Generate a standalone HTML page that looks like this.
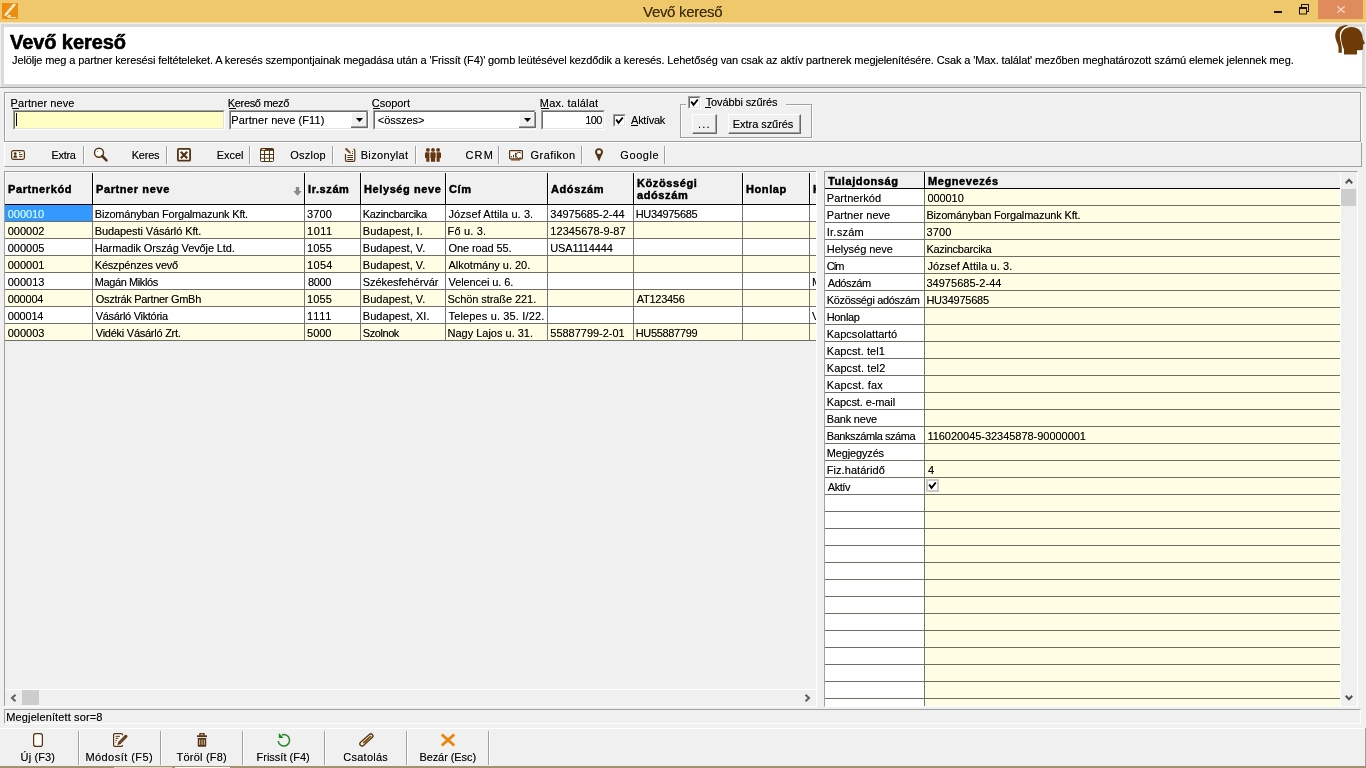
<!DOCTYPE html><html><head><meta charset="utf-8"><title>Vevő kereső</title><style>
html,body{margin:0;padding:0;width:1366px;height:768px;overflow:hidden;background:#f0f0f0;font-family:"Liberation Sans", sans-serif;font-size:11px;color:#000;}
#root div{position:absolute;box-sizing:border-box;}
#root{will-change:transform;position:absolute;left:0;top:0;width:1366px;height:768px;overflow:hidden;}
.t{white-space:pre;text-shadow:0 0 0 rgba(0,0,0,0.45);}
svg{position:absolute;overflow:visible;}

</style></head><body><div id="root">
<div style="left:0px;top:0px;width:1366px;height:22px;background:#efc86b;"></div>
<div style="left:0px;top:22px;width:1366px;height:1px;background:#f6e2ae;"></div>
<div style="left:0px;top:23px;width:1366px;height:1px;background:#f3efe2;"></div>
<div style="left:2px;top:3px;width:16px;height:16px;background:#ee8c12;"></div>
<svg style="left:2px;top:3px" width="16" height="16" viewBox="0 0 16 16"><path d="M2.2 13 L2.8 11 L11.4 0.8 Q12.5 0 13.4 1 Q14 2 13.2 2.6 L4.6 12.6 Z" fill="#fff6d6"/><path d="M6.3 7.6 L7.3 8.4 M9.2 4.3 L10.1 5" stroke="#e0a040" stroke-width="0.8"/><path d="M5.2 14 Q6.8 11.8 8.3 12.6 Q8 14.2 6.2 14.2 L14.2 14.8" stroke="#fff3c8" stroke-width="1.1" fill="none"/></svg>
<div class="t" style="left:643px;top:3px;line-height:17px;font-size:15px;color:#3c2b08;letter-spacing:-0.3px;">Vevő kereső</div>
<div style="left:1274px;top:11px;width:8px;height:2px;background:#1a1205;"></div>
<svg style="left:1299px;top:4px" width="11" height="11" viewBox="0 0 11 11"><path d="M2.5 2.5 V0.5 H9.5 V7.5 H7.5" stroke="#1a1205" stroke-width="1" fill="none" stroke-linejoin="miter" shape-rendering="crispEdges"/><rect x="0.5" y="3.5" width="7" height="6.5" stroke="#1a1205" stroke-width="1" fill="none"/><rect x="0" y="3" width="8" height="2" fill="#1a1205"/></svg>
<div style="left:1318px;top:0px;width:45px;height:19px;background:#e08b5c;"></div>
<svg style="left:1337px;top:6px" width="8" height="7" viewBox="0 0 8 7"><path d="M0.3 0.3 L7.7 6.7 M7.7 0.3 L0.3 6.7" stroke="#fbd8c2" stroke-width="1.2"/></svg>
<div style="left:1px;top:24px;width:1364px;height:64px;background:#dadada;"></div>
<div style="left:4px;top:27px;width:1358px;height:57px;background:#ffffff;"></div>
<div style="left:0px;top:87px;width:1366px;height:1px;background:#a0a0a0;"></div>
<div class="t" style="left:10px;top:31px;line-height:23px;font-size:20px;font-weight:bold;letter-spacing:-0.08px;-webkit-text-stroke:0.5px #000;">Vevő kereső</div>
<div class="t" style="left:12px;top:54px;line-height:13px;font-size:11px;letter-spacing:-0.116px;">Jelölje meg a partner keresési feltételeket. A keresés szempontjainak megadása után a 'Frissít (F4)' gomb leütésével kezdődik a keresés. Lehetőség van csak az aktív partnerek megjelenítésére. Csak a 'Max. találat' mezőben meghatározott számú elemek jelennek meg.</div>
<svg style="left:1334px;top:24px" width="32" height="32" viewBox="0 0 32 32"><path d="M13 1 C6 1.2 1.2 5.5 1.2 11.5 C1.2 16.5 4.5 20 4.5 24 V28.7 H7.8 V24 C7.6 19.5 5.8 16 5.8 11.5 C5.8 6.5 9.5 2.8 13.8 1.8 Z" fill="#6e3a06"/><path d="M10 30.6 V25.5 C8.5 22 7 18 7 13 C7 6.5 11.5 2.9 17.5 2.9 C23.5 2.9 28 6.5 28.5 12.5 L28.8 15 L31 19.5 L29 20.5 V24.5 C29 25.8 28.3 26.2 27 26.2 H23 V30.6 Z" fill="#6e3a06"/></svg>
<div style="left:4px;top:92px;width:1357px;height:50px;border:1px solid #a0a0a0;box-shadow:inset 1px 1px 0 #fff, 1px 1px 0 #fff;"></div>
<div class="t" style="left:10.6px;top:97px;line-height:13px;font-size:11px;letter-spacing:0.073px;">Partner neve</div>
<div style="left:12px;top:108px;width:7px;height:1px;background:#000;"></div>
<div style="left:13px;top:110px;width:212px;height:20px;background:#ffffc4;border-top:1px solid #a0a0a0;border-left:1px solid #a0a0a0;border-right:1px solid #fff;border-bottom:1px solid #fff;"></div>
<div style="left:14px;top:111px;width:210px;height:18px;border-top:1px solid #696969;border-left:1px solid #696969;border-right:1px solid #e3e3e3;border-bottom:1px solid #e3e3e3;"></div>
<div style="left:16px;top:113px;width:1px;height:13px;background:#000;"></div>
<div class="t" style="left:227.7px;top:97px;line-height:13px;font-size:11px;letter-spacing:-0.310px;">Kereső mező</div>
<div style="left:229px;top:108px;width:7px;height:1px;background:#000;"></div>
<div style="left:229px;top:110px;width:140px;height:20px;background:#fff;border-top:1px solid #a0a0a0;border-left:1px solid #a0a0a0;border-right:1px solid #fff;border-bottom:1px solid #fff;"></div>
<div style="left:230px;top:111px;width:138px;height:18px;border-top:1px solid #696969;border-left:1px solid #696969;border-right:1px solid #e3e3e3;border-bottom:1px solid #e3e3e3;"></div>
<div class="t" style="left:231.3px;top:114px;line-height:13px;font-size:11px;letter-spacing:0.088px;">Partner neve (F11)</div>
<div style="left:351px;top:112px;width:17px;height:16px;background:#f0f0f0;border-right:1px solid #696969;border-bottom:1px solid #696969;box-shadow:inset -1px -1px 0 #a0a0a0, inset 1px 1px 0 #fff;"></div>
<svg style="left:356px;top:118px" width="7" height="4" viewBox="0 0 7 4"><path d="M0 0 H7 L3.5 4 Z" fill="#000"/></svg>
<div class="t" style="left:371.8px;top:97px;line-height:13px;font-size:11px;letter-spacing:-0.050px;">Csoport</div>
<div style="left:373px;top:108px;width:7px;height:1px;background:#000;"></div>
<div style="left:373px;top:110px;width:163px;height:20px;background:#fff;border-top:1px solid #a0a0a0;border-left:1px solid #a0a0a0;border-right:1px solid #fff;border-bottom:1px solid #fff;"></div>
<div style="left:374px;top:111px;width:161px;height:18px;border-top:1px solid #696969;border-left:1px solid #696969;border-right:1px solid #e3e3e3;border-bottom:1px solid #e3e3e3;"></div>
<div class="t" style="left:377.8px;top:114px;line-height:13px;font-size:11px;letter-spacing:-0.071px;">&lt;összes&gt;</div>
<div style="left:519px;top:112px;width:17px;height:16px;background:#f0f0f0;border-right:1px solid #696969;border-bottom:1px solid #696969;box-shadow:inset -1px -1px 0 #a0a0a0, inset 1px 1px 0 #fff;"></div>
<svg style="left:524px;top:118px" width="7" height="4" viewBox="0 0 7 4"><path d="M0 0 H7 L3.5 4 Z" fill="#000"/></svg>
<div class="t" style="left:539.8px;top:97px;line-height:13px;font-size:11px;letter-spacing:0.182px;">Max. találat</div>
<div style="left:541px;top:108px;width:8px;height:1px;background:#000;"></div>
<div style="left:541px;top:110px;width:64px;height:20px;background:#fff;border-top:1px solid #a0a0a0;border-left:1px solid #a0a0a0;border-right:1px solid #fff;border-bottom:1px solid #fff;"></div>
<div style="left:542px;top:111px;width:62px;height:18px;border-top:1px solid #696969;border-left:1px solid #696969;border-right:1px solid #e3e3e3;border-bottom:1px solid #e3e3e3;"></div>
<div class="t" style="left:585.3px;top:114px;line-height:13px;font-size:11px;letter-spacing:-0.600px;">100</div>
<div style="left:613px;top:114px;width:13px;height:13px;background:#fff;border-top:1px solid #a0a0a0;border-left:1px solid #a0a0a0;border-right:1px solid #fff;border-bottom:1px solid #fff;"></div>
<div style="left:614px;top:115px;width:11px;height:11px;border-top:1px solid #696969;border-left:1px solid #696969;border-right:1px solid #e3e3e3;border-bottom:1px solid #e3e3e3;"></div>
<svg style="left:615px;top:116px" width="9" height="9" viewBox="0 0 9 9"><path d="M1.2 3.5 L3.5 6.8 L7.8 1.5" stroke="#000" stroke-width="1.9" fill="none"/></svg>
<div class="t" style="left:631.1px;top:114px;line-height:13px;font-size:11px;letter-spacing:-0.300px;">Aktívak</div>
<div style="left:631px;top:125px;width:7px;height:1px;background:#000;"></div>
<div style="left:680px;top:104px;width:132px;height:34px;border:1px solid #a0a0a0;box-shadow:inset 1px 1px 0 #fff, 1px 1px 0 #fff;"></div>
<div style="left:686px;top:95px;width:100px;height:14px;background:#f0f0f0;"></div>
<div style="left:688px;top:96px;width:13px;height:13px;background:#fff;border-top:1px solid #a0a0a0;border-left:1px solid #a0a0a0;border-right:1px solid #fff;border-bottom:1px solid #fff;"></div>
<div style="left:689px;top:97px;width:11px;height:11px;border-top:1px solid #696969;border-left:1px solid #696969;border-right:1px solid #e3e3e3;border-bottom:1px solid #e3e3e3;"></div>
<svg style="left:690px;top:98px" width="9" height="9" viewBox="0 0 9 9"><path d="M1.2 3.5 L3.5 6.8 L7.8 1.5" stroke="#000" stroke-width="1.9" fill="none"/></svg>
<div class="t" style="left:705.7px;top:96px;line-height:13px;font-size:11px;letter-spacing:-0.123px;">További szűrés</div>
<div style="left:705px;top:107px;width:6px;height:1px;background:#000;"></div>
<div style="left:692px;top:114px;width:25px;height:20px;background:#f0f0f0;border-top:1px solid #fff;border-left:1px solid #fff;border-right:1px solid #696969;border-bottom:1px solid #696969;box-shadow:inset -1px -1px 0 #a0a0a0;"></div>
<div class="t" style="left:644.5px;width:120px;text-align:center;top:118px;line-height:13px;font-size:11px;letter-spacing:1.2px;">...</div>
<div style="left:728px;top:114px;width:73px;height:20px;background:#f0f0f0;border-top:1px solid #fff;border-left:1px solid #fff;border-right:1px solid #696969;border-bottom:1px solid #696969;box-shadow:inset -1px -1px 0 #a0a0a0;"></div>
<div class="t" style="left:732.8px;top:118px;line-height:13px;font-size:11px;letter-spacing:-0.055px;">Extra szűrés</div>
<div style="left:4px;top:142px;width:1358px;height:25px;border-bottom:1px solid #a0a0a0;border-right:1px solid #a0a0a0;border-top:1px solid #fff;border-left:1px solid #fff;"></div>
<div style="left:83px;top:146px;width:1px;height:18px;background:#a0a0a0;"></div>
<div style="left:84px;top:146px;width:1px;height:18px;background:#fff;"></div>
<div style="left:166px;top:146px;width:1px;height:18px;background:#a0a0a0;"></div>
<div style="left:167px;top:146px;width:1px;height:18px;background:#fff;"></div>
<div style="left:249px;top:146px;width:1px;height:18px;background:#a0a0a0;"></div>
<div style="left:250px;top:146px;width:1px;height:18px;background:#fff;"></div>
<div style="left:332px;top:146px;width:1px;height:18px;background:#a0a0a0;"></div>
<div style="left:333px;top:146px;width:1px;height:18px;background:#fff;"></div>
<div style="left:415px;top:146px;width:1px;height:18px;background:#a0a0a0;"></div>
<div style="left:416px;top:146px;width:1px;height:18px;background:#fff;"></div>
<div style="left:498px;top:146px;width:1px;height:18px;background:#a0a0a0;"></div>
<div style="left:499px;top:146px;width:1px;height:18px;background:#fff;"></div>
<div style="left:581px;top:146px;width:1px;height:18px;background:#a0a0a0;"></div>
<div style="left:582px;top:146px;width:1px;height:18px;background:#fff;"></div>
<div style="left:664px;top:146px;width:1px;height:18px;background:#a0a0a0;"></div>
<div style="left:665px;top:146px;width:1px;height:18px;background:#fff;"></div>
<div class="t" style="left:51.5px;top:149px;line-height:13px;font-size:11px;letter-spacing:-0.300px;">Extra</div>
<div class="t" style="left:131.7px;top:149px;line-height:13px;font-size:11px;letter-spacing:-0.225px;">Keres</div>
<div class="t" style="left:216.8px;top:149px;line-height:13px;font-size:11px;letter-spacing:-0.075px;">Excel</div>
<div class="t" style="left:290.3px;top:149px;line-height:13px;font-size:11px;letter-spacing:0.240px;">Oszlop</div>
<div class="t" style="left:360.7px;top:149px;line-height:13px;font-size:11px;letter-spacing:0.337px;">Bizonylat</div>
<div class="t" style="left:465.5px;top:149px;line-height:13px;font-size:11px;letter-spacing:1.150px;">CRM</div>
<div class="t" style="left:530.6px;top:149px;line-height:13px;font-size:11px;letter-spacing:0.414px;">Grafikon</div>
<div class="t" style="left:620.3px;top:149px;line-height:13px;font-size:11px;letter-spacing:0.580px;">Google</div>
<svg style="left:11px;top:150px" width="14" height="10" viewBox="0 0 14 10"><rect x="0.6" y="0.6" width="12.8" height="8.8" rx="1.8" fill="#fffdf8" stroke="#523316" stroke-width="1.2"/><circle cx="4.2" cy="3.6" r="1.4" fill="#523316"/><path d="M2.2 7.8 L3 5.2 H5.4 L6.2 7.8 Z" fill="#523316"/><path d="M8 2.5 H9.5 M8 4.6 H11.5 M8 6.6 H11.5" stroke="#523316" stroke-width="1"/></svg>
<svg style="left:93px;top:147px" width="16" height="15" viewBox="0 0 16 15"><circle cx="6" cy="5.8" r="4.5" fill="#fffdf8" stroke="#523316" stroke-width="1.4"/><path d="M9.2 9 L13.5 13.3" stroke="#523316" stroke-width="2.6" stroke-linecap="round"/><path d="M4.3 4.6 L5 3.9" stroke="#333" stroke-width="1"/></svg>
<svg style="left:177px;top:148px" width="14" height="14" viewBox="0 0 14 14"><rect x="0.9" y="0.9" width="12.2" height="11.8" rx="1" fill="#fffdf8" stroke="#523316" stroke-width="1.8"/><path d="M3.8 3.8 L10.2 10.2 M10.2 3.8 L3.8 10.2" stroke="#523316" stroke-width="2.2"/></svg>
<svg style="left:260px;top:148px" width="14" height="14" viewBox="0 0 14 14"><rect x="0.5" y="0.5" width="13" height="13" rx="1" fill="#fffdf8" stroke="#523316" stroke-width="1"/><rect x="0.5" y="0.5" width="13" height="2.4" fill="#523316"/><ellipse cx="3.5" cy="1.5" rx="2" ry="0.6" fill="#fff3e0"/><path d="M0.5 6.5 H13.5 M0.5 10.2 H13.5 M4.5 2.5 V13.5 M9.5 2.5 V13.5" stroke="#523316" stroke-width="1"/></svg>
<svg style="left:344px;top:147px" width="12" height="15" viewBox="0 0 12 15"><path d="M1.5 7 V13 Q1.5 14.3 2.8 14.3 H9.5 Q10.8 14.3 10.8 13 V3.5 Q10.8 2.2 9.5 2.2" stroke="#523316" stroke-width="1.2" fill="#fffdf8"/><path d="M3.3 8.5 H9 M3.3 10.5 H9 M3.3 12.5 H9" stroke="#523316" stroke-width="1"/><circle cx="8.5" cy="4.5" r="0.55" fill="#523316"/><circle cx="8.5" cy="6.4" r="0.55" fill="#523316"/><path d="M0.8 2 L2.5 0.8 L6.5 5 L7 6.8 L5.2 6.3 Z" fill="#7a4a1c"/></svg>
<svg style="left:425px;top:148px" width="16" height="14" viewBox="0 0 16 14"><g fill="#643610"><circle cx="2.9" cy="1.9" r="1.9"/><circle cx="8" cy="1.9" r="1.9"/><circle cx="13.1" cy="1.9" r="1.9"/><path d="M0.8 4.3 H4.4 V13.8 H1.3 V10 H0 V5.2 Z"/><path d="M5.9 4.3 H10.1 L10.6 5 V10 L10.1 10 V13.8 H5.9 V10 L5.4 10 V5 Z"/><path d="M11.6 4.3 H15.2 L16 5.2 V10 H14.7 V13.8 H11.6 Z"/></g></svg>
<svg style="left:509px;top:150px" width="14" height="11" viewBox="0 0 14 11"><rect x="0.6" y="0.6" width="12.8" height="8.3" rx="0.8" fill="#fffdf8" stroke="#523316" stroke-width="1.2"/><path d="M2.3 7.5 V6 M4.5 7.5 V4.8 M6.6 7.5 V2.8" stroke="#523316" stroke-width="1"/><path d="M11.8 3 A3 3 0 1 0 11.8 7.6" stroke="#523316" stroke-width="1" fill="none"/><rect x="2.2" y="9" width="9" height="1.6" fill="#8a5a2a"/></svg>
<svg style="left:595px;top:148px" width="8" height="14" viewBox="0 0 8 14"><path d="M4 0.2 C1.8 0.2 0 1.9 0 4.1 C0 5.8 1.2 7 1.8 8.5 L4 13.5 L6.2 8.5 C6.8 7 8 5.8 8 4.1 C8 1.9 6.2 0.2 4 0.2 Z" fill="#523316"/><circle cx="4" cy="4" r="2" fill="#fffdf8"/></svg>
<div style="left:4px;top:171px;width:812px;height:535px;background:#f0f0f0;"></div>
<div style="left:4px;top:171px;width:812px;height:1px;background:#a0a0a0;"></div>
<div style="left:4px;top:171px;width:1px;height:535px;background:#a0a0a0;"></div>
<div style="left:5px;top:172px;width:811px;height:517px;overflow:hidden;">
<div style="left:0px;top:0px;width:811px;height:32px;background:#f0f0f0;"></div>
<div style="left:0px;top:32px;width:811px;height:1px;background:#000;"></div>
<div style="left:87px;top:0px;width:1px;height:32px;background:#000;"></div>
<div style="left:88px;top:0px;width:1px;height:32px;background:#fff;"></div>
<div style="left:299px;top:0px;width:1px;height:32px;background:#000;"></div>
<div style="left:300px;top:0px;width:1px;height:32px;background:#fff;"></div>
<div style="left:355px;top:0px;width:1px;height:32px;background:#000;"></div>
<div style="left:356px;top:0px;width:1px;height:32px;background:#fff;"></div>
<div style="left:440px;top:0px;width:1px;height:32px;background:#000;"></div>
<div style="left:441px;top:0px;width:1px;height:32px;background:#fff;"></div>
<div style="left:542px;top:0px;width:1px;height:32px;background:#000;"></div>
<div style="left:543px;top:0px;width:1px;height:32px;background:#fff;"></div>
<div style="left:628px;top:0px;width:1px;height:32px;background:#000;"></div>
<div style="left:629px;top:0px;width:1px;height:32px;background:#fff;"></div>
<div style="left:737px;top:0px;width:1px;height:32px;background:#000;"></div>
<div style="left:738px;top:0px;width:1px;height:32px;background:#fff;"></div>
<div style="left:804px;top:0px;width:1px;height:32px;background:#000;"></div>
<div style="left:805px;top:0px;width:1px;height:32px;background:#fff;"></div>
<div style="left:0px;top:0px;width:1px;height:32px;background:#fff;"></div>
<div style="left:0px;top:0px;width:811px;height:1px;background:#fff;"></div>
<div class="t" style="left:3px;top:11px;line-height:13px;font-size:11px;font-weight:bold;letter-spacing:0.6px;-webkit-text-stroke:0.35px #000;">Partnerkód</div>
<div class="t" style="left:91px;top:11px;line-height:13px;font-size:11px;font-weight:bold;letter-spacing:0.6px;-webkit-text-stroke:0.35px #000;">Partner neve</div>
<div class="t" style="left:303px;top:11px;line-height:13px;font-size:11px;font-weight:bold;letter-spacing:0.6px;-webkit-text-stroke:0.35px #000;">Ir.szám</div>
<div class="t" style="left:359px;top:11px;line-height:13px;font-size:11px;font-weight:bold;letter-spacing:0.6px;-webkit-text-stroke:0.35px #000;">Helység neve</div>
<div class="t" style="left:444px;top:11px;line-height:13px;font-size:11px;font-weight:bold;letter-spacing:0.6px;-webkit-text-stroke:0.35px #000;">Cím</div>
<div class="t" style="left:546px;top:11px;line-height:13px;font-size:11px;font-weight:bold;letter-spacing:0.6px;-webkit-text-stroke:0.35px #000;">Adószám</div>
<div class="t" style="left:632px;top:5px;line-height:13px;font-size:11px;font-weight:bold;letter-spacing:0.6px;-webkit-text-stroke:0.35px #000;">Közösségi</div>
<div class="t" style="left:632px;top:17px;line-height:13px;font-size:11px;font-weight:bold;letter-spacing:0.6px;-webkit-text-stroke:0.35px #000;">adószám</div>
<div class="t" style="left:741px;top:11px;line-height:13px;font-size:11px;font-weight:bold;letter-spacing:0.6px;-webkit-text-stroke:0.35px #000;">Honlap</div>
<div class="t" style="left:808px;top:11px;line-height:13px;font-size:11px;font-weight:bold;letter-spacing:0.6px;-webkit-text-stroke:0.35px #000;">Kapcsolattartó</div>
<svg style="left:288px;top:15px" width="9" height="9" viewBox="0 0 9 9"><path d="M2.8 0 H6.2 V4 H8.8 L4.5 8.8 L0.2 4 H2.8 Z" fill="#8a8a8a"/></svg>
<div style="left:0px;top:33px;width:811px;height:16px;background:#ffffff;"></div>
<div style="left:0px;top:49px;width:811px;height:1px;background:#6e6e62;"></div>
<div style="left:87px;top:33px;width:1px;height:17px;background:#747474;"></div>
<div style="left:299px;top:33px;width:1px;height:17px;background:#747474;"></div>
<div style="left:355px;top:33px;width:1px;height:17px;background:#747474;"></div>
<div style="left:440px;top:33px;width:1px;height:17px;background:#747474;"></div>
<div style="left:542px;top:33px;width:1px;height:17px;background:#747474;"></div>
<div style="left:628px;top:33px;width:1px;height:17px;background:#747474;"></div>
<div style="left:737px;top:33px;width:1px;height:17px;background:#747474;"></div>
<div style="left:804px;top:33px;width:1px;height:17px;background:#747474;"></div>
<div style="left:0px;top:33px;width:87px;height:16px;background:#3399ff;"></div>
<div class="t" style="left:2.8px;top:36px;line-height:13px;font-size:11px;letter-spacing:-0.060px;color:#d6ffff;text-shadow:0 0 0 rgba(214,255,255,0.45);">000010</div>
<div class="t" style="left:89.75px;top:36px;line-height:13px;font-size:11px;letter-spacing:-0.198px;">Bizományban Forgalmazunk Kft.</div>
<div class="t" style="left:302.1px;top:36px;line-height:13px;font-size:11px;letter-spacing:0.100px;">3700</div>
<div class="t" style="left:357.8px;top:36px;line-height:13px;font-size:11px;letter-spacing:-0.350px;">Kazincbarcika</div>
<div class="t" style="left:443.5px;top:36px;line-height:13px;font-size:11px;letter-spacing:0.083px;">József Attila u. 3.</div>
<div class="t" style="left:545.3px;top:36px;line-height:13px;font-size:11px;letter-spacing:-0.025px;">34975685-2-44</div>
<div class="t" style="left:630.7px;top:36px;line-height:13px;font-size:11px;letter-spacing:-0.322px;">HU34975685</div>
<div style="left:0px;top:50px;width:811px;height:16px;background:#fffee4;"></div>
<div style="left:0px;top:66px;width:811px;height:1px;background:#6e6e62;"></div>
<div style="left:87px;top:50px;width:1px;height:17px;background:#747474;"></div>
<div style="left:299px;top:50px;width:1px;height:17px;background:#747474;"></div>
<div style="left:355px;top:50px;width:1px;height:17px;background:#747474;"></div>
<div style="left:440px;top:50px;width:1px;height:17px;background:#747474;"></div>
<div style="left:542px;top:50px;width:1px;height:17px;background:#747474;"></div>
<div style="left:628px;top:50px;width:1px;height:17px;background:#747474;"></div>
<div style="left:737px;top:50px;width:1px;height:17px;background:#747474;"></div>
<div style="left:804px;top:50px;width:1px;height:17px;background:#747474;"></div>
<div class="t" style="left:2.75px;top:53px;line-height:13px;font-size:11px;letter-spacing:-0.010px;">000002</div>
<div class="t" style="left:89.75px;top:53px;line-height:13px;font-size:11px;letter-spacing:-0.107px;">Budapesti Vásárló Kft.</div>
<div class="t" style="left:302.1px;top:53px;line-height:13px;font-size:11px;letter-spacing:0.433px;">1011</div>
<div class="t" style="left:357.8px;top:53px;line-height:13px;font-size:11px;letter-spacing:0.118px;">Budapest, I.</div>
<div class="t" style="left:442.5px;top:53px;line-height:13px;font-size:11px;letter-spacing:0.171px;">Fő u. 3.</div>
<div class="t" style="left:545.3px;top:53px;line-height:13px;font-size:11px;letter-spacing:0.058px;">12345678-9-87</div>
<div style="left:0px;top:67px;width:811px;height:16px;background:#ffffff;"></div>
<div style="left:0px;top:83px;width:811px;height:1px;background:#6e6e62;"></div>
<div style="left:87px;top:67px;width:1px;height:17px;background:#747474;"></div>
<div style="left:299px;top:67px;width:1px;height:17px;background:#747474;"></div>
<div style="left:355px;top:67px;width:1px;height:17px;background:#747474;"></div>
<div style="left:440px;top:67px;width:1px;height:17px;background:#747474;"></div>
<div style="left:542px;top:67px;width:1px;height:17px;background:#747474;"></div>
<div style="left:628px;top:67px;width:1px;height:17px;background:#747474;"></div>
<div style="left:737px;top:67px;width:1px;height:17px;background:#747474;"></div>
<div style="left:804px;top:67px;width:1px;height:17px;background:#747474;"></div>
<div class="t" style="left:2.75px;top:70px;line-height:13px;font-size:11px;letter-spacing:-0.010px;">000005</div>
<div class="t" style="left:89.75px;top:70px;line-height:13px;font-size:11px;letter-spacing:-0.113px;">Harmadik Ország Vevője Ltd.</div>
<div class="t" style="left:302.1px;top:70px;line-height:13px;font-size:11px;letter-spacing:0.100px;">1055</div>
<div class="t" style="left:357.8px;top:70px;line-height:13px;font-size:11px;letter-spacing:0.045px;">Budapest, V.</div>
<div class="t" style="left:443.5px;top:70px;line-height:13px;font-size:11px;letter-spacing:-0.100px;">One road 55.</div>
<div class="t" style="left:545.3px;top:70px;line-height:13px;font-size:11px;letter-spacing:-0.144px;">USA1114444</div>
<div style="left:0px;top:84px;width:811px;height:16px;background:#fffee4;"></div>
<div style="left:0px;top:100px;width:811px;height:1px;background:#6e6e62;"></div>
<div style="left:87px;top:84px;width:1px;height:17px;background:#747474;"></div>
<div style="left:299px;top:84px;width:1px;height:17px;background:#747474;"></div>
<div style="left:355px;top:84px;width:1px;height:17px;background:#747474;"></div>
<div style="left:440px;top:84px;width:1px;height:17px;background:#747474;"></div>
<div style="left:542px;top:84px;width:1px;height:17px;background:#747474;"></div>
<div style="left:628px;top:84px;width:1px;height:17px;background:#747474;"></div>
<div style="left:737px;top:84px;width:1px;height:17px;background:#747474;"></div>
<div style="left:804px;top:84px;width:1px;height:17px;background:#747474;"></div>
<div class="t" style="left:2.75px;top:87px;line-height:13px;font-size:11px;letter-spacing:-0.010px;">000001</div>
<div class="t" style="left:89.75px;top:87px;line-height:13px;font-size:11px;letter-spacing:-0.196px;">Készpénzes vevő</div>
<div class="t" style="left:302.1px;top:87px;line-height:13px;font-size:11px;letter-spacing:0.300px;">1054</div>
<div class="t" style="left:357.8px;top:87px;line-height:13px;font-size:11px;letter-spacing:0.045px;">Budapest, V.</div>
<div class="t" style="left:443.5px;top:87px;line-height:13px;font-size:11px;letter-spacing:-0.013px;">Alkotmány u. 20.</div>
<div style="left:0px;top:101px;width:811px;height:16px;background:#ffffff;"></div>
<div style="left:0px;top:117px;width:811px;height:1px;background:#6e6e62;"></div>
<div style="left:87px;top:101px;width:1px;height:17px;background:#747474;"></div>
<div style="left:299px;top:101px;width:1px;height:17px;background:#747474;"></div>
<div style="left:355px;top:101px;width:1px;height:17px;background:#747474;"></div>
<div style="left:440px;top:101px;width:1px;height:17px;background:#747474;"></div>
<div style="left:542px;top:101px;width:1px;height:17px;background:#747474;"></div>
<div style="left:628px;top:101px;width:1px;height:17px;background:#747474;"></div>
<div style="left:737px;top:101px;width:1px;height:17px;background:#747474;"></div>
<div style="left:804px;top:101px;width:1px;height:17px;background:#747474;"></div>
<div class="t" style="left:2.75px;top:104px;line-height:13px;font-size:11px;letter-spacing:-0.010px;">000013</div>
<div class="t" style="left:89.75px;top:104px;line-height:13px;font-size:11px;letter-spacing:-0.405px;">Magán Miklós</div>
<div class="t" style="left:303.1px;top:104px;line-height:13px;font-size:11px;letter-spacing:-0.367px;">8000</div>
<div class="t" style="left:357.8px;top:104px;line-height:13px;font-size:11px;letter-spacing:-0.062px;">Székesfehérvár</div>
<div class="t" style="left:443.5px;top:104px;line-height:13px;font-size:11px;letter-spacing:-0.092px;">Velencei u. 6.</div>
<div class="t" style="left:807px;top:104px;line-height:13px;font-size:11px;letter-spacing:-0.15px;">Magán Miklós</div>
<div style="left:0px;top:118px;width:811px;height:16px;background:#fffee4;"></div>
<div style="left:0px;top:134px;width:811px;height:1px;background:#6e6e62;"></div>
<div style="left:87px;top:118px;width:1px;height:17px;background:#747474;"></div>
<div style="left:299px;top:118px;width:1px;height:17px;background:#747474;"></div>
<div style="left:355px;top:118px;width:1px;height:17px;background:#747474;"></div>
<div style="left:440px;top:118px;width:1px;height:17px;background:#747474;"></div>
<div style="left:542px;top:118px;width:1px;height:17px;background:#747474;"></div>
<div style="left:628px;top:118px;width:1px;height:17px;background:#747474;"></div>
<div style="left:737px;top:118px;width:1px;height:17px;background:#747474;"></div>
<div style="left:804px;top:118px;width:1px;height:17px;background:#747474;"></div>
<div class="t" style="left:2.75px;top:121px;line-height:13px;font-size:11px;letter-spacing:-0.210px;">000004</div>
<div class="t" style="left:90.75px;top:121px;line-height:13px;font-size:11px;letter-spacing:-0.303px;">Osztrák Partner GmBh</div>
<div class="t" style="left:302.1px;top:121px;line-height:13px;font-size:11px;letter-spacing:0.100px;">1055</div>
<div class="t" style="left:357.8px;top:121px;line-height:13px;font-size:11px;letter-spacing:0.045px;">Budapest, V.</div>
<div class="t" style="left:442.5px;top:121px;line-height:13px;font-size:11px;letter-spacing:-0.075px;">Schön straße 221.</div>
<div class="t" style="left:631.7px;top:121px;line-height:13px;font-size:11px;letter-spacing:-0.257px;">AT123456</div>
<div style="left:0px;top:135px;width:811px;height:16px;background:#ffffff;"></div>
<div style="left:0px;top:151px;width:811px;height:1px;background:#6e6e62;"></div>
<div style="left:87px;top:135px;width:1px;height:17px;background:#747474;"></div>
<div style="left:299px;top:135px;width:1px;height:17px;background:#747474;"></div>
<div style="left:355px;top:135px;width:1px;height:17px;background:#747474;"></div>
<div style="left:440px;top:135px;width:1px;height:17px;background:#747474;"></div>
<div style="left:542px;top:135px;width:1px;height:17px;background:#747474;"></div>
<div style="left:628px;top:135px;width:1px;height:17px;background:#747474;"></div>
<div style="left:737px;top:135px;width:1px;height:17px;background:#747474;"></div>
<div style="left:804px;top:135px;width:1px;height:17px;background:#747474;"></div>
<div class="t" style="left:2.75px;top:138px;line-height:13px;font-size:11px;letter-spacing:-0.210px;">000014</div>
<div class="t" style="left:90.75px;top:138px;line-height:13px;font-size:11px;letter-spacing:-0.303px;">Vásárló Viktória</div>
<div class="t" style="left:302.1px;top:138px;line-height:13px;font-size:11px;letter-spacing:0.767px;">1111</div>
<div class="t" style="left:357.8px;top:138px;line-height:13px;font-size:11px;letter-spacing:0.050px;">Budapest, XI.</div>
<div class="t" style="left:443.5px;top:138px;line-height:13px;font-size:11px;letter-spacing:0.147px;">Telepes u. 35. I/22.</div>
<div class="t" style="left:807px;top:138px;line-height:13px;font-size:11px;letter-spacing:-0.15px;">Vásárló Viktória</div>
<div style="left:0px;top:152px;width:811px;height:16px;background:#fffee4;"></div>
<div style="left:0px;top:168px;width:811px;height:1px;background:#6e6e62;"></div>
<div style="left:87px;top:152px;width:1px;height:17px;background:#747474;"></div>
<div style="left:299px;top:152px;width:1px;height:17px;background:#747474;"></div>
<div style="left:355px;top:152px;width:1px;height:17px;background:#747474;"></div>
<div style="left:440px;top:152px;width:1px;height:17px;background:#747474;"></div>
<div style="left:542px;top:152px;width:1px;height:17px;background:#747474;"></div>
<div style="left:628px;top:152px;width:1px;height:17px;background:#747474;"></div>
<div style="left:737px;top:152px;width:1px;height:17px;background:#747474;"></div>
<div style="left:804px;top:152px;width:1px;height:17px;background:#747474;"></div>
<div class="t" style="left:2.75px;top:155px;line-height:13px;font-size:11px;letter-spacing:-0.010px;">000003</div>
<div class="t" style="left:90.75px;top:155px;line-height:13px;font-size:11px;letter-spacing:-0.253px;">Vidéki Vásárló Zrt.</div>
<div class="t" style="left:302.1px;top:155px;line-height:13px;font-size:11px;letter-spacing:-0.033px;">5000</div>
<div class="t" style="left:357.8px;top:155px;line-height:13px;font-size:11px;letter-spacing:-0.433px;">Szolnok</div>
<div class="t" style="left:442.5px;top:155px;line-height:13px;font-size:11px;letter-spacing:-0.006px;">Nagy Lajos u. 31.</div>
<div class="t" style="left:545.3px;top:155px;line-height:13px;font-size:11px;letter-spacing:-0.017px;">55887799-2-01</div>
<div class="t" style="left:630.7px;top:155px;line-height:13px;font-size:11px;letter-spacing:-0.322px;">HU55887799</div>
</div>
<div style="left:5px;top:689px;width:811px;height:1px;background:#fff;"></div>
<div style="left:816px;top:171px;width:1px;height:536px;background:#fff;"></div>
<div style="left:4px;top:706px;width:813px;height:1px;background:#fff;"></div>
<div style="left:5px;top:690px;width:811px;height:16px;background:#f0f0f0;"></div>
<svg style="left:10px;top:694px" width="7" height="8" viewBox="0 0 7 8"><path d="M5.5 0.8 L2 4 L5.5 7.2" stroke="#606060" stroke-width="2" fill="none"/></svg>
<div style="left:22px;top:690px;width:17px;height:15px;background:#cdcdcd;"></div>
<svg style="left:804px;top:694px" width="7" height="8" viewBox="0 0 7 8"><path d="M1.5 0.8 L5 4 L1.5 7.2" stroke="#606060" stroke-width="2" fill="none"/></svg>
<div style="left:824px;top:171px;width:534px;height:536px;background:#f0f0f0;border:1px solid #a0a0a0;border-right-color:#fff;border-bottom-color:#fff;"></div>
<div style="left:825px;top:172px;width:516px;height:534px;overflow:hidden;">
<div style="left:0px;top:0px;width:516px;height:16px;background:#f0f0f0;"></div>
<div style="left:0px;top:16px;width:515px;height:1px;background:#000;"></div>
<div style="left:99px;top:0px;width:1px;height:16px;background:#000;"></div>
<div style="left:100px;top:0px;width:1px;height:16px;background:#fff;"></div>
<div class="t" style="left:3px;top:3px;line-height:13px;font-size:11px;font-weight:bold;letter-spacing:0.6px;-webkit-text-stroke:0.35px #000;">Tulajdonság</div>
<div class="t" style="left:103px;top:3px;line-height:13px;font-size:11px;font-weight:bold;letter-spacing:0.6px;-webkit-text-stroke:0.35px #000;">Megnevezés</div>
<div style="left:515px;top:0px;width:1px;height:534px;background:#fff;"></div>
<div style="left:0px;top:17px;width:99px;height:16px;background:#fff;"></div>
<div style="left:100px;top:17px;width:415px;height:16px;background:#fffee4;"></div>
<div style="left:0px;top:33px;width:515px;height:1px;background:#6e6e62;"></div>
<div style="left:99px;top:17px;width:1px;height:17px;background:#747474;"></div>
<div class="t" style="left:1.75px;top:20px;line-height:13px;font-size:11px;letter-spacing:0.056px;">Partnerkód</div>
<div class="t" style="left:102.39999999999998px;top:20px;line-height:13px;font-size:11px;letter-spacing:-0.060px;">000010</div>
<div style="left:0px;top:34px;width:99px;height:16px;background:#fff;"></div>
<div style="left:100px;top:34px;width:415px;height:16px;background:#fffee4;"></div>
<div style="left:0px;top:50px;width:515px;height:1px;background:#6e6e62;"></div>
<div style="left:99px;top:34px;width:1px;height:17px;background:#747474;"></div>
<div class="t" style="left:1.75px;top:37px;line-height:13px;font-size:11px;letter-spacing:0.045px;">Partner neve</div>
<div class="t" style="left:101.39999999999998px;top:37px;line-height:13px;font-size:11px;letter-spacing:-0.175px;">Bizományban Forgalmazunk Kft.</div>
<div style="left:0px;top:51px;width:99px;height:16px;background:#fff;"></div>
<div style="left:100px;top:51px;width:415px;height:16px;background:#fffee4;"></div>
<div style="left:0px;top:67px;width:515px;height:1px;background:#6e6e62;"></div>
<div style="left:99px;top:51px;width:1px;height:17px;background:#747474;"></div>
<div class="t" style="left:1.75px;top:54px;line-height:13px;font-size:11px;letter-spacing:0.242px;">Ir.szám</div>
<div class="t" style="left:101.39999999999998px;top:54px;line-height:13px;font-size:11px;letter-spacing:0.167px;">3700</div>
<div style="left:0px;top:68px;width:99px;height:16px;background:#fff;"></div>
<div style="left:100px;top:68px;width:415px;height:16px;background:#fffee4;"></div>
<div style="left:0px;top:84px;width:515px;height:1px;background:#6e6e62;"></div>
<div style="left:99px;top:68px;width:1px;height:17px;background:#747474;"></div>
<div class="t" style="left:1.75px;top:71px;line-height:13px;font-size:11px;letter-spacing:-0.041px;">Helység neve</div>
<div class="t" style="left:101.39999999999998px;top:71px;line-height:13px;font-size:11px;letter-spacing:-0.267px;">Kazincbarcika</div>
<div style="left:0px;top:85px;width:99px;height:16px;background:#fff;"></div>
<div style="left:100px;top:85px;width:415px;height:16px;background:#fffee4;"></div>
<div style="left:0px;top:101px;width:515px;height:1px;background:#6e6e62;"></div>
<div style="left:99px;top:85px;width:1px;height:17px;background:#747474;"></div>
<div class="t" style="left:1.75px;top:88px;line-height:13px;font-size:11px;letter-spacing:-1.275px;">Cím</div>
<div class="t" style="left:102.39999999999998px;top:88px;line-height:13px;font-size:11px;letter-spacing:0.100px;">József Attila u. 3.</div>
<div style="left:0px;top:102px;width:99px;height:16px;background:#fff;"></div>
<div style="left:100px;top:102px;width:415px;height:16px;background:#fffee4;"></div>
<div style="left:0px;top:118px;width:515px;height:1px;background:#6e6e62;"></div>
<div style="left:99px;top:102px;width:1px;height:17px;background:#747474;"></div>
<div class="t" style="left:2.75px;top:105px;line-height:13px;font-size:11px;letter-spacing:-0.417px;">Adószám</div>
<div class="t" style="left:101.39999999999998px;top:105px;line-height:13px;font-size:11px;letter-spacing:0.033px;">34975685-2-44</div>
<div style="left:0px;top:119px;width:99px;height:16px;background:#fff;"></div>
<div style="left:100px;top:119px;width:415px;height:16px;background:#fffee4;"></div>
<div style="left:0px;top:135px;width:515px;height:1px;background:#6e6e62;"></div>
<div style="left:99px;top:119px;width:1px;height:17px;background:#747474;"></div>
<div class="t" style="left:1.75px;top:122px;line-height:13px;font-size:11px;letter-spacing:-0.334px;">Közösségi adószám</div>
<div class="t" style="left:101.39999999999998px;top:122px;line-height:13px;font-size:11px;letter-spacing:-0.233px;">HU34975685</div>
<div style="left:0px;top:136px;width:99px;height:16px;background:#fff;"></div>
<div style="left:100px;top:136px;width:415px;height:16px;background:#fffee4;"></div>
<div style="left:0px;top:152px;width:515px;height:1px;background:#6e6e62;"></div>
<div style="left:99px;top:136px;width:1px;height:17px;background:#747474;"></div>
<div class="t" style="left:1.75px;top:139px;line-height:13px;font-size:11px;letter-spacing:-0.350px;">Honlap</div>
<div style="left:0px;top:153px;width:99px;height:16px;background:#fff;"></div>
<div style="left:100px;top:153px;width:415px;height:16px;background:#fffee4;"></div>
<div style="left:0px;top:169px;width:515px;height:1px;background:#6e6e62;"></div>
<div style="left:99px;top:153px;width:1px;height:17px;background:#747474;"></div>
<div class="t" style="left:1.75px;top:156px;line-height:13px;font-size:11px;letter-spacing:0.012px;">Kapcsolattartó</div>
<div style="left:0px;top:170px;width:99px;height:16px;background:#fff;"></div>
<div style="left:100px;top:170px;width:415px;height:16px;background:#fffee4;"></div>
<div style="left:0px;top:186px;width:515px;height:1px;background:#6e6e62;"></div>
<div style="left:99px;top:170px;width:1px;height:17px;background:#747474;"></div>
<div class="t" style="left:1.75px;top:173px;line-height:13px;font-size:11px;letter-spacing:0.059px;">Kapcst. tel1</div>
<div style="left:0px;top:187px;width:99px;height:16px;background:#fff;"></div>
<div style="left:100px;top:187px;width:415px;height:16px;background:#fffee4;"></div>
<div style="left:0px;top:203px;width:515px;height:1px;background:#6e6e62;"></div>
<div style="left:99px;top:187px;width:1px;height:17px;background:#747474;"></div>
<div class="t" style="left:1.75px;top:190px;line-height:13px;font-size:11px;letter-spacing:0.095px;">Kapcst. tel2</div>
<div style="left:0px;top:204px;width:99px;height:16px;background:#fff;"></div>
<div style="left:100px;top:204px;width:415px;height:16px;background:#fffee4;"></div>
<div style="left:0px;top:220px;width:515px;height:1px;background:#6e6e62;"></div>
<div style="left:99px;top:204px;width:1px;height:17px;background:#747474;"></div>
<div class="t" style="left:1.75px;top:207px;line-height:13px;font-size:11px;letter-spacing:0.155px;">Kapcst. fax</div>
<div style="left:0px;top:221px;width:99px;height:16px;background:#fff;"></div>
<div style="left:100px;top:221px;width:415px;height:16px;background:#fffee4;"></div>
<div style="left:0px;top:237px;width:515px;height:1px;background:#6e6e62;"></div>
<div style="left:99px;top:221px;width:1px;height:17px;background:#747474;"></div>
<div class="t" style="left:1.75px;top:224px;line-height:13px;font-size:11px;letter-spacing:-0.104px;">Kapcst. e-mail</div>
<div style="left:0px;top:238px;width:99px;height:16px;background:#fff;"></div>
<div style="left:100px;top:238px;width:415px;height:16px;background:#fffee4;"></div>
<div style="left:0px;top:254px;width:515px;height:1px;background:#6e6e62;"></div>
<div style="left:99px;top:238px;width:1px;height:17px;background:#747474;"></div>
<div class="t" style="left:1.75px;top:241px;line-height:13px;font-size:11px;letter-spacing:-0.206px;">Bank neve</div>
<div style="left:0px;top:255px;width:99px;height:16px;background:#fff;"></div>
<div style="left:100px;top:255px;width:415px;height:16px;background:#fffee4;"></div>
<div style="left:0px;top:271px;width:515px;height:1px;background:#6e6e62;"></div>
<div style="left:99px;top:255px;width:1px;height:17px;background:#747474;"></div>
<div class="t" style="left:1.75px;top:258px;line-height:13px;font-size:11px;letter-spacing:-0.433px;">Bankszámla száma</div>
<div class="t" style="left:102.39999999999998px;top:258px;line-height:13px;font-size:11px;letter-spacing:-0.035px;">116020045-32345878-90000001</div>
<div style="left:0px;top:272px;width:99px;height:16px;background:#fff;"></div>
<div style="left:100px;top:272px;width:415px;height:16px;background:#fffee4;"></div>
<div style="left:0px;top:288px;width:515px;height:1px;background:#6e6e62;"></div>
<div style="left:99px;top:272px;width:1px;height:17px;background:#747474;"></div>
<div class="t" style="left:1.75px;top:275px;line-height:13px;font-size:11px;letter-spacing:-0.150px;">Megjegyzés</div>
<div style="left:0px;top:289px;width:99px;height:16px;background:#fff;"></div>
<div style="left:100px;top:289px;width:415px;height:16px;background:#fffee4;"></div>
<div style="left:0px;top:305px;width:515px;height:1px;background:#6e6e62;"></div>
<div style="left:99px;top:289px;width:1px;height:17px;background:#747474;"></div>
<div class="t" style="left:1.75px;top:292px;line-height:13px;font-size:11px;letter-spacing:0.059px;">Fiz.határidő</div>
<div class="t" style="left:103px;top:292px;line-height:13px;font-size:11px;letter-spacing:-0.15px;">4</div>
<div style="left:0px;top:306px;width:99px;height:16px;background:#fff;"></div>
<div style="left:100px;top:306px;width:415px;height:16px;background:#fffee4;"></div>
<div style="left:0px;top:322px;width:515px;height:1px;background:#6e6e62;"></div>
<div style="left:99px;top:306px;width:1px;height:17px;background:#747474;"></div>
<div class="t" style="left:2.75px;top:309px;line-height:13px;font-size:11px;letter-spacing:-0.438px;">Aktív</div>
<div style="left:101px;top:307px;width:13px;height:13px;background:#fff;border:2px solid #cbcbcb;"></div>
<svg style="left:103px;top:309px" width="9" height="9" viewBox="0 0 9 9"><path d="M1.2 3.5 L3.5 6.8 L7.8 1.5" stroke="#000" stroke-width="1.9" fill="none"/></svg>
<div style="left:0px;top:323px;width:99px;height:16px;background:#fff;"></div>
<div style="left:100px;top:323px;width:415px;height:16px;background:#fffee4;"></div>
<div style="left:0px;top:339px;width:515px;height:1px;background:#6e6e62;"></div>
<div style="left:99px;top:323px;width:1px;height:17px;background:#747474;"></div>
<div style="left:0px;top:340px;width:99px;height:16px;background:#fff;"></div>
<div style="left:100px;top:340px;width:415px;height:16px;background:#fffee4;"></div>
<div style="left:0px;top:356px;width:515px;height:1px;background:#6e6e62;"></div>
<div style="left:99px;top:340px;width:1px;height:17px;background:#747474;"></div>
<div style="left:0px;top:357px;width:99px;height:16px;background:#fff;"></div>
<div style="left:100px;top:357px;width:415px;height:16px;background:#fffee4;"></div>
<div style="left:0px;top:373px;width:515px;height:1px;background:#6e6e62;"></div>
<div style="left:99px;top:357px;width:1px;height:17px;background:#747474;"></div>
<div style="left:0px;top:374px;width:99px;height:16px;background:#fff;"></div>
<div style="left:100px;top:374px;width:415px;height:16px;background:#fffee4;"></div>
<div style="left:0px;top:390px;width:515px;height:1px;background:#6e6e62;"></div>
<div style="left:99px;top:374px;width:1px;height:17px;background:#747474;"></div>
<div style="left:0px;top:391px;width:99px;height:16px;background:#fff;"></div>
<div style="left:100px;top:391px;width:415px;height:16px;background:#fffee4;"></div>
<div style="left:0px;top:407px;width:515px;height:1px;background:#6e6e62;"></div>
<div style="left:99px;top:391px;width:1px;height:17px;background:#747474;"></div>
<div style="left:0px;top:408px;width:99px;height:16px;background:#fff;"></div>
<div style="left:100px;top:408px;width:415px;height:16px;background:#fffee4;"></div>
<div style="left:0px;top:424px;width:515px;height:1px;background:#6e6e62;"></div>
<div style="left:99px;top:408px;width:1px;height:17px;background:#747474;"></div>
<div style="left:0px;top:425px;width:99px;height:16px;background:#fff;"></div>
<div style="left:100px;top:425px;width:415px;height:16px;background:#fffee4;"></div>
<div style="left:0px;top:441px;width:515px;height:1px;background:#6e6e62;"></div>
<div style="left:99px;top:425px;width:1px;height:17px;background:#747474;"></div>
<div style="left:0px;top:442px;width:99px;height:16px;background:#fff;"></div>
<div style="left:100px;top:442px;width:415px;height:16px;background:#fffee4;"></div>
<div style="left:0px;top:458px;width:515px;height:1px;background:#6e6e62;"></div>
<div style="left:99px;top:442px;width:1px;height:17px;background:#747474;"></div>
<div style="left:0px;top:459px;width:99px;height:16px;background:#fff;"></div>
<div style="left:100px;top:459px;width:415px;height:16px;background:#fffee4;"></div>
<div style="left:0px;top:475px;width:515px;height:1px;background:#6e6e62;"></div>
<div style="left:99px;top:459px;width:1px;height:17px;background:#747474;"></div>
<div style="left:0px;top:476px;width:99px;height:16px;background:#fff;"></div>
<div style="left:100px;top:476px;width:415px;height:16px;background:#fffee4;"></div>
<div style="left:0px;top:492px;width:515px;height:1px;background:#6e6e62;"></div>
<div style="left:99px;top:476px;width:1px;height:17px;background:#747474;"></div>
<div style="left:0px;top:493px;width:99px;height:16px;background:#fff;"></div>
<div style="left:100px;top:493px;width:415px;height:16px;background:#fffee4;"></div>
<div style="left:0px;top:509px;width:515px;height:1px;background:#6e6e62;"></div>
<div style="left:99px;top:493px;width:1px;height:17px;background:#747474;"></div>
<div style="left:0px;top:510px;width:99px;height:16px;background:#fff;"></div>
<div style="left:100px;top:510px;width:415px;height:16px;background:#fffee4;"></div>
<div style="left:0px;top:526px;width:515px;height:1px;background:#6e6e62;"></div>
<div style="left:99px;top:510px;width:1px;height:17px;background:#747474;"></div>
<div style="left:0px;top:527px;width:99px;height:16px;background:#fff;"></div>
<div style="left:100px;top:527px;width:415px;height:16px;background:#fffee4;"></div>
<div style="left:0px;top:543px;width:515px;height:1px;background:#6e6e62;"></div>
<div style="left:99px;top:527px;width:1px;height:17px;background:#747474;"></div>
</div>
<div style="left:1341px;top:172px;width:16px;height:534px;background:#f0f0f0;"></div>
<svg style="left:1345px;top:178px" width="8" height="6" viewBox="0 0 8 6"><path d="M0.8 5.2 L4 1.8 L7.2 5.2" stroke="#505050" stroke-width="2" fill="none"/></svg>
<div style="left:1341px;top:189px;width:15px;height:17px;background:#cdcdcd;"></div>
<svg style="left:1345px;top:695px" width="8" height="6" viewBox="0 0 8 6"><path d="M0.8 0.8 L4 4.2 L7.2 0.8" stroke="#505050" stroke-width="2" fill="none"/></svg>
<div style="left:4px;top:709px;width:1357px;height:15px;border-top:1px solid #a0a0a0;border-left:1px solid #a0a0a0;border-right:1px solid #fff;border-bottom:1px solid #fff;"></div>
<div class="t" style="left:6.3px;top:711px;line-height:13px;font-size:11px;letter-spacing:0.122px;">Megjelenített sor=8</div>
<div style="left:0px;top:728px;width:1366px;height:38px;background:#f0f0f0;border-top:1px solid #fff;"></div>
<div style="left:1365px;top:728px;width:1px;height:38px;background:#a0a0a0;"></div>
<div style="left:78px;top:731px;width:1px;height:34px;background:#a0a0a0;"></div>
<div style="left:79px;top:731px;width:1px;height:34px;background:#fff;"></div>
<div style="left:160px;top:731px;width:1px;height:34px;background:#a0a0a0;"></div>
<div style="left:161px;top:731px;width:1px;height:34px;background:#fff;"></div>
<div style="left:242px;top:731px;width:1px;height:34px;background:#a0a0a0;"></div>
<div style="left:243px;top:731px;width:1px;height:34px;background:#fff;"></div>
<div style="left:324px;top:731px;width:1px;height:34px;background:#a0a0a0;"></div>
<div style="left:325px;top:731px;width:1px;height:34px;background:#fff;"></div>
<div style="left:406px;top:731px;width:1px;height:34px;background:#a0a0a0;"></div>
<div style="left:407px;top:731px;width:1px;height:34px;background:#fff;"></div>
<div style="left:488px;top:731px;width:1px;height:34px;background:#a0a0a0;"></div>
<div style="left:489px;top:731px;width:1px;height:34px;background:#fff;"></div>
<div class="t" style="left:20.6px;top:751px;line-height:13px;font-size:11px;letter-spacing:0.133px;">Új (F3)</div>
<div class="t" style="left:85.4px;top:751px;line-height:13px;font-size:11px;letter-spacing:0.445px;">Módosít (F5)</div>
<div class="t" style="left:176.6px;top:751px;line-height:13px;font-size:11px;letter-spacing:0.200px;">Töröl (F8)</div>
<div class="t" style="left:256.5px;top:751px;line-height:13px;font-size:11px;letter-spacing:0.000px;">Frissít (F4)</div>
<div class="t" style="left:343.3px;top:751px;line-height:13px;font-size:11px;letter-spacing:0.243px;">Csatolás</div>
<div class="t" style="left:419.4px;top:751px;line-height:13px;font-size:11px;letter-spacing:-0.080px;">Bezár (Esc)</div>
<svg style="left:33px;top:733px" width="10" height="14" viewBox="0 0 10 14"><rect x="0.6" y="0.6" width="8.8" height="12.8" rx="2.2" fill="#fffdf8" stroke="#523316" stroke-width="1.2"/></svg>
<svg style="left:113px;top:733px" width="15" height="14" viewBox="0 0 15 14"><path d="M9.5 2.2 V1.8 Q9.5 0.6 8.3 0.6 H1.8 Q0.6 0.6 0.6 1.8 V12.2 Q0.6 13.4 1.8 13.4 H8.3 Q9.5 13.4 9.5 12.2 V12" stroke="#523316" stroke-width="1.2" fill="#fffdf8"/><path d="M2.5 3.3 H7 M2.5 5.3 H5.5 M2.5 7.4 H4 M2.5 9.4 H3.2" stroke="#523316" stroke-width="1"/><path d="M4.3 12.3 L5.3 8.8 L11.8 2.3 Q12.9 1.2 14 2.3 Q15.1 3.4 14 4.5 L7.7 11 Z" fill="#5e3814"/><path d="M6.6 9.2 L12.3 3.6 M7.4 10 L13 4.4" stroke="#c8a070" stroke-width="0.55" stroke-dasharray="1 1"/></svg>
<svg style="left:197px;top:733px" width="10" height="14" viewBox="0 0 10 14"><rect x="2.2" y="0" width="5.6" height="2.6" rx="0.6" fill="#523316"/><ellipse cx="5" cy="1.3" rx="1.6" ry="0.5" fill="#e8c8a0"/><rect x="0" y="2.3" width="10" height="1.8" fill="#523316"/><path d="M0.8 5 H9.2 V13 Q9.2 13.7 8.5 13.7 H1.5 Q0.8 13.7 0.8 13 Z" fill="#523316"/><path d="M2.7 6.5 V11.8 M5 6.5 V11.8 M7.3 6.5 V11.8" stroke="#f5dcb8" stroke-width="0.9"/></svg>
<svg style="left:277px;top:733px" width="14" height="14" viewBox="0 0 14 14"><path d="M1.2 8 A5.7 5.7 0 1 0 4.8 2" stroke="#2a862a" stroke-width="1.5" fill="none"/><path d="M1.8 0 V4.9 H6.6 Z" fill="#148a14"/></svg>
<svg style="left:359px;top:733px" width="15" height="14" viewBox="0 0 15 14"><path d="M3 10.8 L11.8 3" stroke="#523316" stroke-width="5.6" stroke-linecap="round"/><path d="M3 10.8 L11.8 3" stroke="#fff3dc" stroke-width="3" stroke-linecap="round"/><path d="M4.6 9.6 L11.6 3.4" stroke="#7a4a1a" stroke-width="1.6" stroke-linecap="round"/><path d="M6 9.8 L10.8 5.6" stroke="#9a6a30" stroke-width="1.2"/></svg>
<svg style="left:441px;top:734px" width="14" height="12" viewBox="0 0 14 12"><path d="M0.8 0.5 L13.2 11.5 M13.2 0.5 L0.8 11.5" stroke="#e8860e" stroke-width="3"/></svg>
<div style="left:0px;top:766px;width:1366px;height:2px;background:#a39070;"></div>
<div style="left:114px;top:767px;width:58px;height:1px;background:#ddd7c2;"></div>
<div style="left:175px;top:767px;width:55px;height:1px;background:#f8f8f8;"></div>
</div></body></html>
